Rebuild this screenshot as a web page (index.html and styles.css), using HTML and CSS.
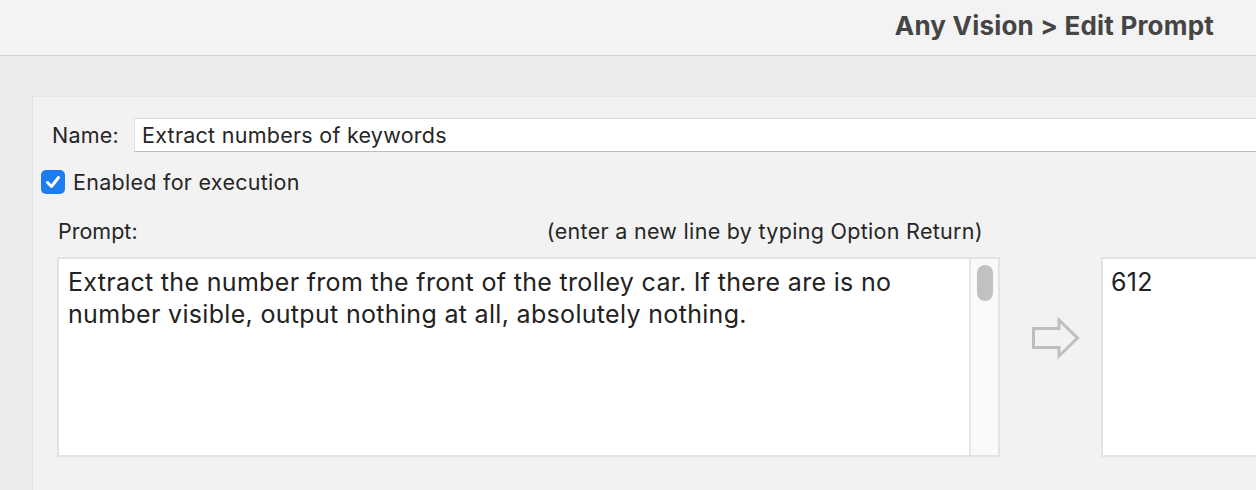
FILE: index.html
```html
<!DOCTYPE html>
<html>
<head>
<meta charset="utf-8">
<link rel="stylesheet" href="styles.css">
</head>
<body>
<header class="titlebar">
  <h1 class="title">Any Vision &gt; Edit Prompt</h1>
</header>
<main class="content">
  <section class="panel">
    <div class="name-row">
      <label class="name-label">Name:</label>
      <div class="name-input">Extract numbers of keywords</div>
    </div>
    <div class="check-row">
      <span class="checkbox">
        <svg viewBox="0 0 24 24" width="24" height="24"><path d="M6.5 12.5 L10.5 16.5 L17.5 7.5" fill="none" stroke="#fff" stroke-width="3" stroke-linecap="round" stroke-linejoin="round"/></svg>
      </span>
      <span class="check-label">Enabled for execution</span>
    </div>
    <div class="prompt-head">
      <span class="prompt-label">Prompt:</span>
      <span class="prompt-hint">(enter a new line by typing Option Return)</span>
    </div>
    <div class="editor-row">
      <div class="prompt-box">
        <div class="prompt-text">Extract the number from the front of the trolley car. If there are is no number visible, output nothing at all, absolutely nothing.</div>
        <div class="scroll-track"><div class="scroll-thumb"></div></div>
      </div>
      <div class="arrow">
        <svg viewBox="0 0 50 44" width="50" height="44"><path d="M2.5 11.5 H28 V3 L46.5 21 L28 39 V30.5 H2.5 Z" fill="none" stroke="#bfbfbf" stroke-width="3" stroke-linejoin="miter"/></svg>
      </div>
      <div class="output-box">612</div>
    </div>
  </section>
</main>
</body>
</html>
```
FILE: styles.css
```css
html, body {
  margin: 0;
  padding: 0;
}
body {
  width: 1256px;
  height: 490px;
  overflow: hidden;
  background: #ececec;
  font-family: Inter, "Noto Sans", sans-serif;
  color: #262626;
}
.titlebar {
  height: 55px;
  background: #f3f3f3;
  border-bottom: 1px solid #d3d3d3;
  display: flex;
  align-items: center;
  justify-content: flex-end;
  padding-right: 42px;
}
.title {
  margin: 0;
  font-size: 26px;
  font-weight: 700;
  color: #454545;
  letter-spacing: 0.2px;
  line-height: 32px;
  margin-top: -3px;
}
.content {
  padding: 40px 0 0 32px;
}
.panel {
  height: 394px;
  background: #f2f2f2;
  border-left: 1px solid #e3e3e3;
  border-top: 1px solid #e6e6e6;
  padding: 21px 0 0 0;
}
.name-row {
  display: flex;
  align-items: center;
  height: 34px;
  padding-left: 19px;
}
.name-label {
  width: 82px;
  font-size: 21.5px;
  letter-spacing: 0.2px;
}
.name-input {
  flex: 1;
  height: 34px;
  background: #fff;
  border-top: 1px solid #dcdcdc;
  border-left: 1px solid #e2e2e2;
  border-bottom: 1px solid #bdbdbd;
  box-sizing: border-box;
  padding-left: 7px;
  font-size: 21.5px;
  line-height: 32px;
  letter-spacing: 0.26px;
}
.check-row {
  display: flex;
  align-items: center;
  height: 24px;
  margin-top: 18px;
  padding-left: 8px;
}
.checkbox {
  width: 24px;
  height: 24px;
  border-radius: 5px;
  background: #1c7cf4;
  display: flex;
}
.check-label {
  margin-left: 8px;
  font-size: 21.5px;
  letter-spacing: 0.28px;
}
.prompt-head {
  display: flex;
  align-items: center;
  height: 28px;
  margin-top: 23px;
  padding-left: 25px;
  width: 925px;
  justify-content: space-between;
  font-size: 21.5px;
}
.prompt-hint {
  letter-spacing: 0.3px;
}
.editor-row {
  display: flex;
  align-items: flex-start;
  margin-top: 12px;
  padding-left: 24px;
}
.prompt-box {
  width: 943px;
  height: 200px;
  box-sizing: border-box;
  border: 2px solid #e3e3e3;
  display: flex;
  background: #fff;
}
.prompt-text {
  flex: 1;
  padding: 7px 10px 0 9px;
  font-size: 25px;
  line-height: 32px;
  letter-spacing: 0.32px;
  color: #222;
}
.scroll-track {
  align-self: stretch;
  width: 27px;
  background: #f9f9f9;
  border-left: 2px solid #e6e6e6;
  display: flex;
  justify-content: center;
  align-items: flex-start;
  padding-top: 6px;
}
.scroll-thumb {
  width: 16px;
  height: 36px;
  border-radius: 8px;
  background: #c1c1c1;
}
.arrow {
  width: 101px;
  box-sizing: border-box;
  padding: 60px 0 0 31px;
  display: flex;
}
.output-box {
  flex: 1;
  height: 200px;
  box-sizing: border-box;
  border: 2px solid #e3e3e3;
  border-right: none;
  background: #fff;
  padding: 7px 0 0 8px;
  font-size: 25px;
  line-height: 32px;
  letter-spacing: 0.3px;
  color: #222;
}
```
